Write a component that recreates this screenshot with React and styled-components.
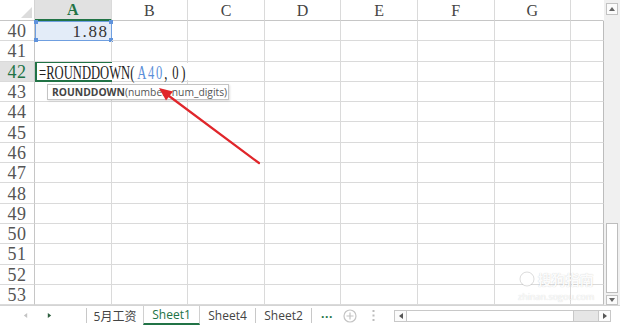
import React from 'react';
import styled, { createGlobalStyle, css } from 'styled-components';

const GREEN = '#217346';
const GRID = '#dadada';

const GlobalStyle = createGlobalStyle`
  html, body { margin: 0; padding: 0; background: #ffffff; }
  body { overflow: hidden; font-family: "Liberation Serif", serif; }
  * { box-sizing: border-box; }
`;

const Window = styled.div`
  position: relative;
  width: 620px;
  height: 329px;
  display: flex;
  flex-direction: column;
  background: #fff;
  overflow: hidden;
`;

const Main = styled.div`
  display: flex;
  height: 305px;
  flex: none;
`;

const Sheet = styled.div`
  position: relative;
  width: 604px;
  height: 305px;
  overflow: hidden;
  display: grid;
  grid-template-columns: 35px repeat(7, 76.6px) 1fr;
  grid-template-rows: 21px repeat(14, 20.3px);
  font-family: "Liberation Serif", serif;
`;

const Corner = styled.div`
  position: relative;
  border-right: 1px solid #d4d4d4;
  border-bottom: 1px solid #c6c6c6;
  &::after {
    content: '';
    position: absolute;
    right: 2px;
    bottom: 2px;
    border-style: solid;
    border-width: 0 0 11px 11px;
    border-color: transparent transparent #dcdcdc transparent;
  }
`;

const ColHead = styled.div`
  display: flex;
  align-items: center;
  justify-content: center;
  padding-top: 1px;
  font-size: 16px;
  color: #444;
  border-right: 1px solid ${p => (p.$last ? 'transparent' : '#dadada')};
  border-bottom: 1px solid #c6c6c6;
  ${p => p.$active && css`
    background: #e1e1e1;
    color: ${GREEN};
    font-weight: bold;
    border-bottom: 2px solid ${GREEN};
  `}
`;

const RowHead = styled.div`
  display: flex;
  align-items: center;
  justify-content: center;
  padding-top: 2px;
  font-size: 18px;
  letter-spacing: 0.5px;
  color: #555;
  border-right: 1px solid #c6c6c6;
  border-bottom: 1px solid ${GRID};
  ${p => p.$active && css`
    background: #e1e1e1;
    color: ${GREEN};
  `}
`;

const Cell = styled.div`
  position: relative;
  border-right: 1px solid ${p => (p.$last ? '#bcbcbc' : GRID)};
  border-bottom: 1px solid ${GRID};
`;

const RefCell = styled(Cell)`
  display: flex;
  align-items: center;
  justify-content: flex-end;
  padding: 2px 2px 0 0;
  background: #e3ecf8;
  border: 1px solid #6f9fe0;
  font-size: 17px;
  letter-spacing: 1.6px;
  color: #333;
`;

const Handle = styled.span`
  position: absolute;
  width: 4px;
  height: 4px;
  background: #5f93dc;
  ${p => (p.$x === 'l' ? 'left: -2px;' : 'right: -2px;')}
  ${p => (p.$y === 't' ? 'top: -2px;' : 'bottom: -2px;')}
`;

const EditCell = styled(Cell)`
  z-index: 2;
  display: flex;
  align-items: flex-end;
  border: 2px solid ${GREEN};
`;

const Editor = styled.div`
  flex: none;
  height: 17px;
  line-height: 21px;
  padding-left: 3px;
  white-space: nowrap;
  background: #fff;
  font-size: 18px;
  color: #222;
  transform: scaleX(0.7);
  transform-origin: left center;
`;

const Args = styled.span`
  letter-spacing: 4px;
`;

const Ref = styled.span`
  color: #5b8fd9;
  letter-spacing: 2.5px;
`;

const Comma = styled.span`
  letter-spacing: 7px;
`;

const Tip = styled.div`
  position: absolute;
  left: 47px;
  top: 84px;
  z-index: 3;
  height: 16px;
  width: 182px;
  padding: 0 4px;
  display: flex;
  align-items: center;
  background: #fff;
  border: 1px solid #c4c4c4;
  box-shadow: 1px 1px 2px rgba(0, 0, 0, 0.12);
  font-family: "Open Sans", "Noto Sans", sans-serif;
  font-size: 10.3px;
  color: #555;
  white-space: nowrap;
`;

const TipFn = styled.span`
  font-weight: 700;
  color: #444;
`;

const ArrowLayer = styled.svg`
  position: absolute;
  left: 0;
  top: 0;
  z-index: 4;
  pointer-events: none;
`;

const VScroll = styled.div`
  width: 16px;
  height: 305px;
  flex: none;
  padding-top: 3px;
  display: flex;
  flex-direction: column;
  align-items: center;
  background: #f0f0f0;
`;

const SBtn = styled.div`
  width: 12px;
  height: ${p => p.$h}px;
  flex: none;
  display: flex;
  align-items: center;
  justify-content: center;
  background: #fbfbfb;
  border: 1px solid #c2c2c2;
`;

const Spacer = styled.div`
  flex: 1;
`;

const VThumb = styled.div`
  width: 12px;
  height: 70px;
  flex: none;
  margin-bottom: 2px;
  background: #fff;
  border: 1px solid #bdbdbd;
`;

const TabBar = styled.div`
  height: 24px;
  flex: none;
  display: flex;
  align-items: stretch;
  padding-bottom: 4px;
  border-top: 1px solid #d4d4d4;
  background: #fff;
  font-family: "Open Sans", "Noto Sans", "Noto Sans CJK SC", sans-serif;
  font-size: 12px;
  color: #444;
`;

const Nav = styled.div`
  width: 86px;
  flex: none;
  display: flex;
  align-items: center;
  padding-left: 23px;
  gap: 19px;
`;

const Sep = styled.div`
  width: 1px;
  height: 15px;
  flex: none;
  align-self: center;
  background: #c8c8c8;
`;

const Tab = styled.div`
  width: ${p => p.$w}px;
  flex: none;
  display: flex;
  align-items: center;
  justify-content: center;
  ${p => p.$active && css`
    color: ${GREEN};
    border-left: 1px solid #d0d0d0;
    border-right: 1px solid #d0d0d0;
    border-bottom: 2px solid ${GREEN};
  `}
`;

const More = styled.div`
  width: 30px;
  flex: none;
  display: flex;
  align-items: center;
  justify-content: center;
  padding-bottom: 4px;
  color: ${GREEN};
  font-weight: 700;
  letter-spacing: 0.5px;
`;

const IconSlot = styled.div`
  width: ${p => p.$w}px;
  flex: none;
  display: flex;
  align-items: center;
  justify-content: center;
`;

const HScroll = styled.div`
  width: 217px;
  height: 12px;
  flex: none;
  align-self: center;
  margin-left: 6px;
  display: flex;
  border: 1px solid #c8c8c8;
  background: #e6e6e6;
`;

const HBtn = styled.div`
  width: 12px;
  flex: none;
  display: flex;
  align-items: center;
  justify-content: center;
  background: #fbfbfb;
  border-${p => p.$side}: 1px solid #c8c8c8;
`;

const HThumb = styled.div`
  width: 167px;
  flex: none;
  background: #fff;
  border-right: 1px solid #c8c8c8;
`;

const HTrack = styled.div`
  flex: 1;
`;

const Watermark = styled.div`
  position: absolute;
  left: 518px;
  top: 270px;
  z-index: 5;
  display: flex;
  flex-direction: column;
  align-items: center;
  gap: 3px;
  pointer-events: none;
  font-family: "Noto Sans CJK SC", sans-serif;
  color: rgba(255, 255, 255, 0.95);
  text-shadow: 0 0 1px rgba(0, 0, 0, 0.22);
`;

const WmTop = styled.div`
  display: flex;
  align-items: center;
  gap: 3px;
  height: 18px;
  font-size: 14px;
  font-weight: 700;
  line-height: 18px;
`;

const WmUrl = styled.div`
  height: 11px;
  font-family: "Open Sans", sans-serif;
  font-size: 9px;
  line-height: 11px;
`;

const Tri = ({ dir, color = '#555', size = 6 }) => {
  const pts = {
    up: '0,5 3,1 6,5',
    down: '0,1 3,5 6,1',
    left: '5,0 1,3 5,6',
    right: '1,0 5,3 1,6',
  }[dir];
  return (
    <svg width={size} height={size} viewBox="0 0 6 6">
      <polygon points={pts} fill={color} />
    </svg>
  );
};

const COLS = ['A', 'B', 'C', 'D', 'E', 'F', 'G', ''];
const ROWS = [40, 41, 42, 43, 44, 45, 46, 47, 48, 49, 50, 51, 52, 53];

export default function App() {
  return (
    <Window>
      <GlobalStyle />
      <Main>
        <Sheet>
          <Corner />
          {COLS.map((c, i) => (
            <ColHead key={'h' + i} $active={c === 'A'} $last={i === COLS.length - 1}>
              {c}
            </ColHead>
          ))}
          {ROWS.map(r => (
            <React.Fragment key={r}>
              <RowHead $active={r === 42}>{r}</RowHead>
              {COLS.map((c, i) => {
                const last = i === COLS.length - 1;
                if (r === 40 && c === 'A') {
                  return (
                    <RefCell key={c}>
                      1.88
                      <Handle $x="l" $y="t" />
                      <Handle $x="r" $y="t" />
                      <Handle $x="l" $y="b" />
                      <Handle $x="r" $y="b" />
                    </RefCell>
                  );
                }
                if (r === 42 && c === 'A') {
                  return (
                    <EditCell key={c}>
                      <Editor>
                        =ROUNDDOWN
                        <Args>
                          (<Ref>A40</Ref><Comma>,</Comma>0)
                        </Args>
                      </Editor>
                    </EditCell>
                  );
                }
                return <Cell key={c + i} $last={last} />;
              })}
            </React.Fragment>
          ))}
          <Tip>
            <TipFn>ROUNDDOWN</TipFn>(number, num_digits)
          </Tip>
          <ArrowLayer width="604" height="305" viewBox="0 0 604 305">
            <line x1="259" y1="163" x2="169" y2="96" stroke="#e0262b" strokeWidth="2.2" strokeLinecap="round" />
            <polygon points="159,88 173,91.5 166,100.5" fill="#e0262b" />
          </ArrowLayer>
        </Sheet>
        <VScroll>
          <SBtn $h={12}>
            <Tri dir="up" color="#666" size={6} />
          </SBtn>
          <Spacer />
          <VThumb />
          <SBtn $h={10}>
            <Tri dir="down" color="#666" size={6} />
          </SBtn>
        </VScroll>
      </Main>
      <TabBar>
        <Nav>
          <Tri dir="left" color="#c4c4c4" size={5} />
          <Tri dir="right" color="#2d5e3e" size={5} />
        </Nav>
        <Sep />
        <Tab $w={56}>5月工资</Tab>
        <Tab $w={57} $active>Sheet1</Tab>
        <Tab $w={55}>Sheet4</Tab>
        <Sep />
        <Tab $w={55}>Sheet2</Tab>
        <Sep />
        <More>...</More>
        <IconSlot $w={16}>
          <svg width="14" height="14" viewBox="0 0 14 14">
            <circle cx="7" cy="7" r="6" fill="none" stroke="#c4c4c4" strokeWidth="1.2" />
            <path d="M7 3.5v7M3.5 7h7" stroke="#c4c4c4" strokeWidth="1.2" />
          </svg>
        </IconSlot>
        <IconSlot $w={30}>
          <svg width="3" height="11" viewBox="0 0 3 11">
            <rect x="0.5" y="0" width="2" height="2" fill="#bdbdbd" />
            <rect x="0.5" y="4.5" width="2" height="2" fill="#bdbdbd" />
            <rect x="0.5" y="9" width="2" height="2" fill="#bdbdbd" />
          </svg>
        </IconSlot>
        <HScroll>
          <HBtn $side="right">
            <Tri dir="left" color="#555" size={6} />
          </HBtn>
          <HThumb />
          <HTrack />
          <HBtn $side="left">
            <Tri dir="right" color="#555" size={6} />
          </HBtn>
        </HScroll>
      </TabBar>
      <Watermark>
        <WmTop>
          <svg width="16" height="16" viewBox="0 0 16 16">
            <circle cx="8" cy="8" r="7" fill="rgba(255,255,255,0.9)" stroke="rgba(0,0,0,0.18)" strokeWidth="0.8" />
          </svg>
          搜狗指南
        </WmTop>
        <WmUrl>zhinan.sogou.com</WmUrl>
      </Watermark>
    </Window>
  );
}
